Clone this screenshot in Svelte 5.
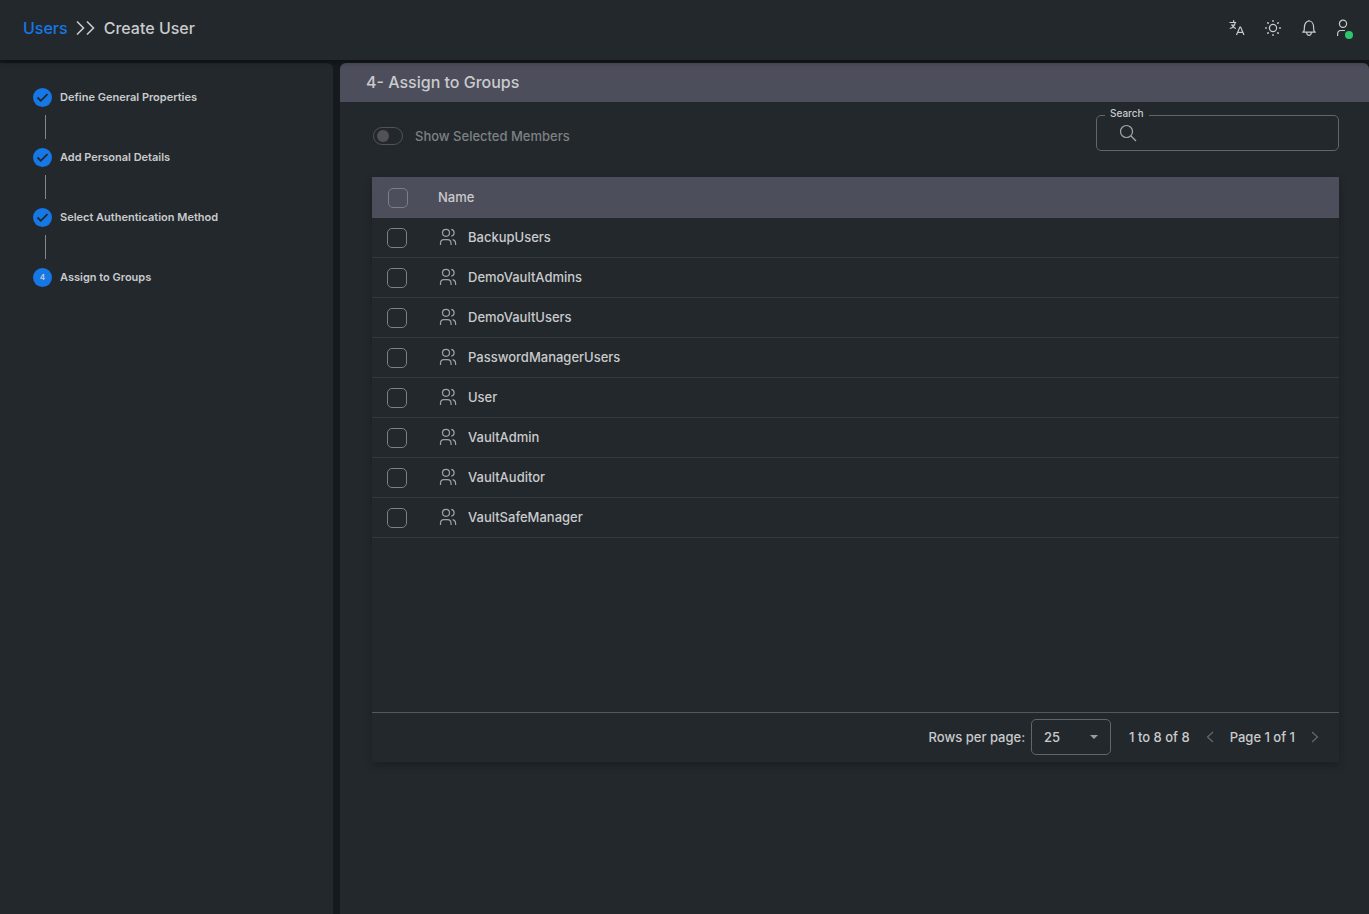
<script lang="ts">
	const steps = [
		{ label: "Define General Properties", done: true },
		{ label: "Add Personal Details", done: true },
		{ label: "Select Authentication Method", done: true },
		{ label: "Assign to Groups", done: false },
	];

	const groups = [
		"BackupUsers",
		"DemoVaultAdmins",
		"DemoVaultUsers",
		"PasswordManagerUsers",
		"User",
		"VaultAdmin",
		"VaultAuditor",
		"VaultSafeManager",
	];

	let selected: string[] = $state([]);
	let onlySelected = $state(false);
	let search = $state("");
	let pageSize = $state("25");

	let rows = $derived(
		groups.filter(
			(name) =>
				name.toLowerCase().includes(search.toLowerCase()) &&
				(!onlySelected || selected.includes(name)),
		),
	);

	function toggleAll(e: Event) {
		selected = (e.currentTarget as HTMLInputElement).checked ? [...groups] : [];
	}
</script>

<div class="app">
	<header class="topbar">
		<nav class="breadcrumb" aria-label="Breadcrumb">
			<a href="#users">Users</a>
			<svg width="20" height="16" viewBox="0 0 20 16" aria-hidden="true">
				<path d="M1 1.500 7.500 8 1 14.500M11 1.500 17.500 8 11 14.500" />
			</svg>
			<h1>Create User</h1>
		</nav>
		<div class="actions">
			<button aria-label="Language">
				<svg width="18" height="18" viewBox="0 0 18 18" aria-hidden="true">
					<path d="M1.500 3.500h6.700M5.600 1.200v2.300M7.200 3.500C6.800 6.500 5 8.800 1.800 9.500M3 6h3.600M4.200 6.200c.8 1.700 1.900 2.800 3.800 3.300" />
					<path d="m8.500 16 3.400-8h.7l3.400 8M9.700 13.300h5.200" />
				</svg>
			</button>
			<button aria-label="Theme">
				<svg width="18" height="18" viewBox="0 0 18 18" aria-hidden="true">
					<circle cx="9" cy="9" r="3.600" />
					<path class="rays" d="M9 1.700v.6M9 15.700v.6M1.700 9h.6M15.700 9h.6M3.800 3.800l.4.4M13.800 13.800l.4.4M3.800 14.200l.4-.4M13.800 4.200l.4-.4" />
				</svg>
			</button>
			<button aria-label="Notifications">
				<svg width="18" height="18" viewBox="0 0 18 18" aria-hidden="true">
					<path d="M2.200 13.200h13.600M3.500 13.200c.8-1.200.9-2.500.9-4.700C4.400 4.800 6.300 2 9 2s4.600 2.800 4.600 6.500c0 2.200.1 3.500.9 4.700M6.600 13.500c.2 1.900 1.200 2.900 2.400 2.900s2.200-1 2.400-2.900M9 .9V2" />
				</svg>
			</button>
			<button aria-label="Account" class="account">
				<svg width="18" height="18" viewBox="0 0 18 18" aria-hidden="true">
					<circle cx="7" cy="4.800" r="3.600" />
					<path d="M1.600 17v-1.700c0-2.600 1.400-3.800 3.400-3.800h4" />
				</svg>
				<span class="status"></span>
			</button>
		</div>
	</header>

	<div class="body">
		<aside class="sidebar">
			<ol class="steps">
				{#each steps as step, i}
					<li>
						<div class="step">
							<span class="marker">
								{#if step.done}
									<svg width="19" height="19" viewBox="0 0 19 19" aria-hidden="true">
										<path d="m4.500 9.500 3.300 3.300 6.700-6.600" />
									</svg>
								{:else}
									{i + 1}
								{/if}
							</span>
							<span>{step.label}</span>
						</div>
						{#if i < steps.length - 1}
							<div class="connector"></div>
						{/if}
					</li>
				{/each}
			</ol>
		</aside>

		<main class="panel">
			<h2>4- Assign to Groups</h2>
			<div class="content">
				<div class="toolbar">
					<label class="toggle">
						<input type="checkbox" role="switch" bind:checked={onlySelected} disabled={!selected.length} />
						Show Selected Members
					</label>
					<div class="search">
						<label for="search">Search</label>
						<svg width="18" height="18" viewBox="0 0 18 18" aria-hidden="true">
							<circle cx="7.500" cy="7.500" r="6" />
							<path d="m12 12 5 5" />
						</svg>
						<input id="search" type="text" bind:value={search} />
					</div>
				</div>

				<section class="card">
					<div class="table-area">
						<table>
							<thead>
								<tr>
									<th class="check">
										<input type="checkbox" aria-label="Select all" onchange={toggleAll} />
									</th>
									<th>Name</th>
								</tr>
							</thead>
							<tbody>
								{#each rows as name (name)}
									<tr>
										<td class="check">
											<input type="checkbox" aria-label={name} value={name} bind:group={selected} />
										</td>
										<td>
											<div class="name">
												<svg width="18" height="18" viewBox="0 0 18 18" aria-hidden="true">
													<circle cx="7" cy="4.800" r="3.500" />
													<path d="M1.500 17v-1.700c0-2.300 1.300-3.700 3.500-3.700h3.500c2.200 0 3.500 1.400 3.500 3.700V17M12.300 1.400c1.700.3 2.800 1.700 2.800 3.400s-1.100 3.100-2.800 3.400M13.600 11.700c1.900.4 3 1.700 3 3.600V17" />
												</svg>
												{name}
											</div>
										</td>
									</tr>
								{/each}
							</tbody>
						</table>
					</div>
					<footer>
						<label for="page-size">Rows per page:</label>
						<div class="select">
							<select id="page-size" bind:value={pageSize}>
								<option>10</option>
								<option>25</option>
								<option>50</option>
							</select>
							<svg width="10" height="6" viewBox="0 0 10 6" aria-hidden="true">
								<path d="M1 1h8L5 5z" />
							</svg>
						</div>
						<span>1 to 8 of 8</span>
						<button aria-label="Previous page" disabled>
							<svg width="8" height="12" viewBox="0 0 8 12" aria-hidden="true"><path d="M7 1 1.500 6 7 11" /></svg>
						</button>
						<span>Page 1 of 1</span>
						<button aria-label="Next page" disabled>
							<svg width="8" height="12" viewBox="0 0 8 12" aria-hidden="true"><path d="m1 1 5.500 5L1 11" /></svg>
						</button>
					</footer>
				</section>
			</div>
		</main>
	</div>
</div>

<style>
	:global(body) {
		background: #16191d;
	}
	.app {
		--surface: #23282c;
		--head: #4d4e5b;
		--text: #c9cbcd;
		--line: #62666a;
		--blue: #1677e6;
		display: flex;
		flex-direction: column;
		min-height: 100vh;
		color: var(--text);
		font: 500 13px/20px Inter, "Liberation Sans", sans-serif;
	}
	.app * {
		box-sizing: border-box;
	}
	svg {
		display: block;
		flex: none;
		fill: none;
		stroke: currentColor;
		stroke-width: 1.2;
	}
	button {
		padding: 0;
		border: 0;
		background: none;
		color: inherit;
	}
	h1,
	h2 {
		margin: 0;
		font-size: 16px;
		font-weight: 500;
	}

	.topbar {
		display: flex;
		align-items: center;
		justify-content: space-between;
		height: 60px;
		padding: 0 15px 4px 23px;
		background: var(--surface);
		box-shadow: 0 2px 6px rgba(0, 0, 0, 0.35);
		z-index: 1;
	}
	.breadcrumb {
		display: flex;
		align-items: center;
		gap: 8px;
		font-size: 16px;
	}
	.breadcrumb svg {
		stroke-width: 1.6;
	}
	.breadcrumb a {
		color: var(--blue);
		text-decoration: none;
	}
	.actions {
		display: flex;
		gap: 18px;
	}
	.rays {
		stroke-width: 1.6;
		stroke-linecap: round;
	}
	.account {
		position: relative;
	}
	.status {
		position: absolute;
		right: 1px;
		bottom: -2px;
		width: 8px;
		height: 8px;
		border-radius: 50%;
		background: #2bc76c;
	}

	.body {
		display: grid;
		grid-template-columns: 333px minmax(0, 1fr);
		flex: 1;
		gap: 7px;
		padding-top: 3px;
	}
	.sidebar {
		padding: 24px 33px;
		border-top-right-radius: 6px;
		background: var(--surface);
	}
	.steps {
		margin: 0;
		padding: 0;
		list-style: none;
		font-size: 11px;
		font-weight: 600;
	}
	.step {
		display: flex;
		align-items: center;
		gap: 8px;
		height: 20px;
	}
	.marker {
		display: flex;
		align-items: center;
		justify-content: center;
		width: 19px;
		height: 19px;
		border-radius: 50%;
		background: var(--blue);
		font-size: 8px;
	}
	.marker svg {
		color: var(--surface);
		stroke-width: 1.8;
	}
	.connector {
		width: 1px;
		height: 24px;
		margin: 8px 12px;
		background: #85888b;
	}

	.panel {
		border-radius: 6px 6px 0 0;
		background: var(--surface);
	}
	h2 {
		height: 39px;
		padding: 0 26px;
		border-radius: 6px 6px 0 0;
		background: var(--head);
		line-height: 39px;
	}
	.content {
		padding: 13px 30px 30px 32px;
	}
	.toolbar {
		display: flex;
		align-items: center;
		justify-content: space-between;
		height: 36px;
		margin-bottom: 26px;
	}
	.toggle {
		display: flex;
		align-items: center;
		gap: 12px;
		margin-top: 6px;
		padding-left: 1px;
		color: #7d8184;
	}
	.toggle input {
		appearance: none;
		display: flex;
		align-items: center;
		width: 30px;
		height: 18px;
		margin: 0;
		padding: 0 3px;
		border: 1px solid #505357;
		border-radius: 9px;
	}
	.toggle input::before {
		content: "";
		width: 12px;
		height: 12px;
		border-radius: 50%;
		background: #505256;
	}
	.toggle input:checked {
		justify-content: flex-end;
	}
	.search {
		position: relative;
		display: flex;
		align-items: center;
		gap: 10px;
		width: 243px;
		height: 36px;
		padding: 0 12px 0 22px;
		border: 1px solid var(--line);
		border-radius: 5px;
	}
	.search label {
		position: absolute;
		top: -10px;
		left: 8px;
		padding: 0 5px;
		background: var(--surface);
		font-size: 10px;
		line-height: 14px;
	}
	.search svg {
		color: #a5a8aa;
	}
	.search input {
		flex: 1;
		min-width: 0;
		border: 0;
		outline: 0;
		background: none;
		color: inherit;
		font: inherit;
	}

	.card {
		box-shadow: 0 3px 8px rgba(0, 0, 0, 0.25);
	}
	.table-area {
		min-height: 535px;
	}
	table {
		width: 100%;
		border-collapse: collapse;
	}
	th,
	td {
		height: 40px;
		padding: 0 0 2px;
		text-align: left;
		font-weight: 500;
	}
	th {
		height: 41px;
		background: var(--head);
	}
	tbody tr {
		box-shadow: inset 0 -1px #34393d;
	}
	.check {
		width: 66px;
		padding: 0 0 0 15px;
	}
	.check input {
		appearance: none;
		display: block;
		width: 20px;
		height: 20px;
		margin: 0;
		border: 1px solid #7c7f83;
		border-radius: 5px;
	}
	th.check {
		padding-left: 16px;
	}
	th input {
		border-color: #93959d;
	}
	.check input:checked {
		border-color: var(--blue);
		background: var(--blue);
	}
	.name {
		display: flex;
		align-items: center;
		gap: 11px;
		padding-left: 1px;
	}
	.name svg {
		color: #a0a3a6;
	}

	footer {
		display: flex;
		align-items: center;
		justify-content: flex-end;
		gap: 16px;
		height: 50px;
		padding: 0 20px 2px 0;
		border-top: 1px solid #54585c;
	}
	.select {
		position: relative;
		width: 80px;
		margin: 0 2px 0 -10px;
	}
	.select select {
		appearance: none;
		width: 100%;
		height: 36px;
		padding: 0 12px;
		border: 1px solid var(--line);
		border-radius: 5px;
		background: none;
		color: inherit;
		font: inherit;
	}
	.select svg {
		position: absolute;
		top: 15px;
		right: 12px;
		fill: #9a9da0;
		stroke: none;
		pointer-events: none;
	}
	footer button {
		color: #65696c;
	}
</style>
